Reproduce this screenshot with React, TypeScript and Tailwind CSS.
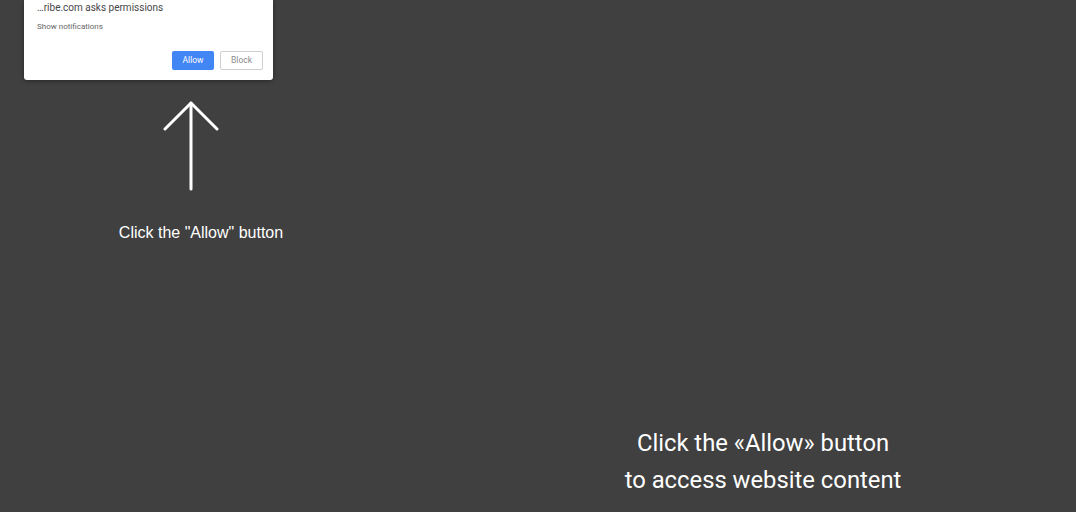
export default function App() {
  return (
    <div className="relative min-h-[512px] w-full overflow-hidden bg-[#404040]">
      <div className="ml-[24px] w-[249px] rounded-b-[3px] bg-white pl-[13px] pr-[10px] pb-[10px] shadow-[0_1px_4px_rgba(0,0,0,0.4)] font-['Roboto',sans-serif]">
        <div className="text-[10px] leading-[15px] text-[#474747]">…ribe.com asks permissions</div>
        <div className="mt-[6px] text-[8px] leading-[12px] text-[#666]">Show notifications</div>
        <div className="mt-[18px] flex justify-end gap-[6px]">
          <button className="h-[19px] w-[42px] rounded-[2px] bg-[#4285f4] text-[8.5px] text-white">Allow</button>
          <button className="h-[19px] w-[43px] rounded-[2px] border border-[#cfcfcf] bg-white text-[8.5px] text-[#8a8a8a]">Block</button>
        </div>
      </div>

      <div className="flex w-[402px] flex-col items-center">
        <svg className="mt-[21px] mr-[20px]" width="60" height="90" viewBox="0 0 60 90" fill="none" stroke="white" strokeWidth="3" strokeLinecap="round" strokeLinejoin="round">
          <path d="M30 2 L30 88" />
          <path d="M4 28 L30 2 L56 28" />
        </svg>
        <div className="mt-[33px] font-['Liberation_Sans',Arial,sans-serif] text-[16px] leading-[18px] text-white">
          Click the "Allow" button
        </div>
      </div>

      <div className="ml-[450px] mt-[183px] w-[626px] text-center font-['Roboto',sans-serif] text-[23.8px] leading-[37px] text-white">
        <div>Click the «Allow» button</div>
        <div>to access website content</div>
      </div>
    </div>
  );
}
